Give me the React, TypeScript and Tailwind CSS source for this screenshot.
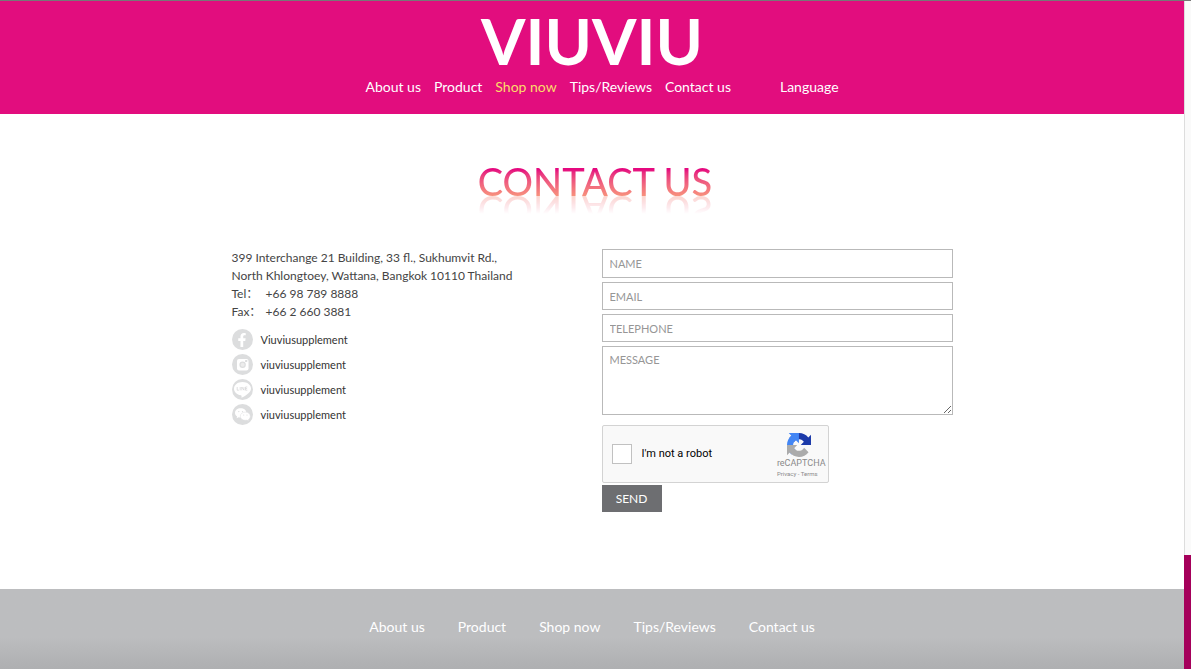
import { FaFacebookF } from "react-icons/fa";

const headerLinks = ["About us", "Product", "Shop now", "Tips/Reviews", "Contact us"];

const fieldClass =
  "block w-full border border-[#b9b9b9] bg-white px-[7px] text-[11px] text-[#444] placeholder:text-[#969696] outline-none";

function InstagramIcon() {
  return (
    <svg viewBox="0 0 21 21" className="size-[21px]" aria-hidden="true">
      <circle cx="10.5" cy="10.5" r="10.5" fill="#dcddde" />
      <rect x="5" y="5" width="11.5" height="11.5" rx="2" fill="#fff" />
      <circle cx="10.6" cy="10.8" r="3.2" fill="#dcddde" />
      <circle cx="10.6" cy="10.8" r="2" fill="#ececec" />
      <rect x="13" y="6" width="2.3" height="2" rx="0.4" fill="#dcddde" />
    </svg>
  );
}

function LineIcon() {
  return (
    <svg viewBox="0 0 21 21" className="size-[21px]" aria-hidden="true">
      <circle cx="10.5" cy="10.5" r="10.5" fill="#dcddde" />
      <path
        d="M10.5 3c-4.9 0-8.5 2.9-8.5 6.7 0 3.3 2.9 5.9 6.8 6.5 1 .2.9.8.6 2.6 2.8-1.3 9.6-5 9.6-9.1 0-3.8-3.6-6.7-8.5-6.7z"
        fill="#fff"
      />
      <path
        d="M5.2 8v3.2h1.7M8.2 8v3.4M9.8 11.4V8l2.2 3.2V8M15.3 8h-1.8v3.2h1.8M13.5 9.6h1.6"
        fill="none"
        stroke="#d2d3d4"
        strokeWidth="0.7"
      />
    </svg>
  );
}

function WechatIcon() {
  return (
    <svg viewBox="0 0 21 21" className="size-[21px]" aria-hidden="true">
      <circle cx="10.5" cy="10.5" r="10.5" fill="#dcddde" />
      <path
        d="M8.7 4.3c-3.3 0-5.7 2-5.7 4.6 0 1.5.8 2.7 2.1 3.6l-.5 1.8 2.1-1.1c.7.2 1.3.3 2 .3 3.3 0 5.7-2 5.7-4.6s-2.4-4.6-5.7-4.6z"
        fill="#fff"
      />
      <path
        d="M13.3 8.1c-2.9 0-5 1.8-5 4.1s2.1 4.1 5 4.1c.6 0 1.1-.1 1.7-.2l1.8 1-.4-1.6c1.2-.8 1.9-1.9 1.9-3.3 0-2.3-2.1-4.1-5-4.1z"
        fill="#fff"
        stroke="#dcddde"
        strokeWidth="0.5"
      />
      <g fill="#dcddde">
        <circle cx="6.8" cy="7.6" r="0.7" />
        <circle cx="10.5" cy="7.6" r="0.7" />
        <circle cx="11.7" cy="11" r="0.6" />
        <circle cx="15" cy="11" r="0.6" />
      </g>
    </svg>
  );
}

function FacebookIcon() {
  return (
    <span className="flex size-[21px] items-center justify-center rounded-full bg-[#dcddde] text-white">
      <FaFacebookF className="size-[14px]" aria-hidden="true" />
    </span>
  );
}

function RecaptchaLogo() {
  return (
    <svg viewBox="0 0 64 64" className="size-6" aria-hidden="true">
      <path
        fill="#1c3aa9"
        d="M64 31.955l-.033-1.37V4.687l-7.16 7.16C50.948 4.674 42.033.093 32.05.093c-10.4 0-19.622 4.96-25.458 12.64l11.736 11.86a15.55 15.55 0 0 1 4.754-5.334c2.05-1.6 4.952-2.906 8.968-2.906.485 0 .86.057 1.135.163 4.976.393 9.288 3.14 11.828 7.124l-8.307 8.307L64 31.953"
      />
      <path
        fill="#4285f4"
        d="M31.862.094l-1.37.033H4.594l7.16 7.16C4.58 13.147 0 22.06 0 32.046c0 10.4 4.96 19.622 12.64 25.458L24.5 45.768a15.55 15.55 0 0 1-5.334-4.754c-1.6-2.05-2.906-4.952-2.906-8.968 0-.485.057-.86.163-1.135.393-4.976 3.14-9.288 7.124-11.828l8.307 8.307L31.86.095"
      />
      <path
        fill="#ababab"
        d="M.001 32.045l.033 1.37v25.898l7.16-7.16c5.86 7.173 14.774 11.754 24.76 11.754 10.4 0 19.622-4.96 25.458-12.64l-11.736-11.86a15.55 15.55 0 0 1-4.754 5.334c-2.05 1.6-4.952 2.906-8.968 2.906-.485 0-.86-.057-1.135-.163-4.976-.393-9.288-3.14-11.828-7.124l8.307-8.307L0 32.047"
      />
    </svg>
  );
}

const socials = [
  { name: "Viuviusupplement", network: "facebook", Icon: FacebookIcon },
  { name: "viuviusupplement", network: "instagram", Icon: InstagramIcon },
  { name: "viuviusupplement", network: "line", Icon: LineIcon },
  { name: "viuviusupplement", network: "wechat", Icon: WechatIcon },
];

function Header() {
  return (
    <header className="flex flex-col items-center bg-[#e20d7e] pt-[10px] pb-[15px] text-white">
      <a href="#home" className="text-[64px] leading-[60px] font-bold">
        VIUVIU
      </a>
      <nav className="mt-1 flex items-center gap-[13px] pl-5 text-sm leading-6">
        {headerLinks.map((label) => (
          <a key={label} href="#" className={label === "Shop now" ? "text-[#fbdc6a]" : ""}>
            {label}
          </a>
        ))}
        <a href="#language" className="ml-9">
          Language
        </a>
      </nav>
    </header>
  );
}

function ContactInfo() {
  return (
    <section className="flex-1 text-xs leading-[18px] text-[#444]">
      <address className="not-italic">
        <p>399 Interchange 21 Building, 33 fl., Sukhumvit Rd.,</p>
        <p>North Khlongtoey, Wattana, Bangkok 10110 Thailand</p>
        <p className="flex">
          <span className="w-[34px]">Tel：</span>+66 98 789 8888
        </p>
        <p className="flex">
          <span className="w-[34px]">Fax：</span>+66 2 660 3881
        </p>
      </address>
      <ul className="mt-2 flex flex-col gap-1 text-[11px]">
        {socials.map(({ name, network, Icon }) => (
          <li key={network} className="flex">
            <a href={`#${network}`} className="flex items-center gap-2 text-[#333]">
              <Icon />
              {name}
            </a>
          </li>
        ))}
      </ul>
    </section>
  );
}

function ContactForm() {
  return (
    <form className="w-[351px]" onSubmit={(e) => e.preventDefault()}>
      <div className="flex flex-col gap-1">
        <input type="text" aria-label="Name" placeholder="NAME" className={`${fieldClass} h-[29px]`} />
        <input type="email" aria-label="Email" placeholder="EMAIL" className={`${fieldClass} h-7`} />
        <input type="tel" aria-label="Telephone" placeholder="TELEPHONE" className={`${fieldClass} h-7`} />
        <textarea aria-label="Message" placeholder="MESSAGE" className={`${fieldClass} h-[69px] resize py-[5px]`} />
      </div>
      <div className="mt-[10px] flex h-[58px] w-[227px] items-center justify-between rounded-xs border border-[#d3d3d3] bg-[#f9f9f9] pr-[2px] pl-[9px] font-[Roboto,sans-serif]">
        <label className="flex items-center gap-[10px] text-[11px] text-black">
          <input
            type="checkbox"
            className="size-5 appearance-none border border-[#c1c1c1] bg-white checked:bg-[#4285f4]"
          />
          I'm not a robot
        </label>
        <div className="pt-1 text-[#8a8a8a]">
          <div className="pl-[10px]">
            <RecaptchaLogo />
          </div>
          <p className="text-[9px] leading-3">reCAPTCHA</p>
          <p className="text-[6px] leading-[10px]">
            <a href="#privacy">Privacy</a> - <a href="#terms">Terms</a>
          </p>
        </div>
      </div>
      <button type="submit" className="mt-[2px] block h-[27px] w-[60px] bg-[#6d6e71] text-xs text-white">
        SEND
      </button>
    </form>
  );
}

function Footer() {
  return (
    <footer className="bg-linear-to-b from-[#bcbdbf] from-60% to-[#aeafb1] pt-[26px] pb-[30px]">
      <nav className="flex justify-center gap-[33px] text-sm leading-6 text-white">
        {headerLinks.map((label) => (
          <a key={label} href="#">
            {label}
          </a>
        ))}
      </nav>
    </footer>
  );
}

function App() {
  return (
    <div className="flex min-h-screen border-t border-[#777] bg-white font-[Lato,'Noto_Sans_CJK_SC',sans-serif]">
      <div className="flex min-w-0 flex-1 flex-col">
        <Header />
        <main className="mx-auto w-full max-w-[721px] flex-1 pt-[39px]">
          <h1 className="mx-auto w-fit bg-linear-to-b from-[#e5097f] from-30% to-[#f9a07a] to-85% bg-clip-text pl-[6px] text-[38px] leading-[56px] font-medium text-transparent [-webkit-box-reflect:below_-26px_linear-gradient(transparent_45%,rgba(0,0,0,0.4)_80%)]">
            CONTACT US
          </h1>
          <div className="flex pt-10">
            <ContactInfo />
            <ContactForm />
          </div>
        </main>
        <Footer />
      </div>
      <div className="flex w-[7px] flex-col border-l border-[#ddd] bg-[#fafafa]" aria-hidden="true">
        <div className="-ml-px mt-auto h-[17vh] bg-[#a5005b]" />
      </div>
    </div>
  );
}

export default App;
